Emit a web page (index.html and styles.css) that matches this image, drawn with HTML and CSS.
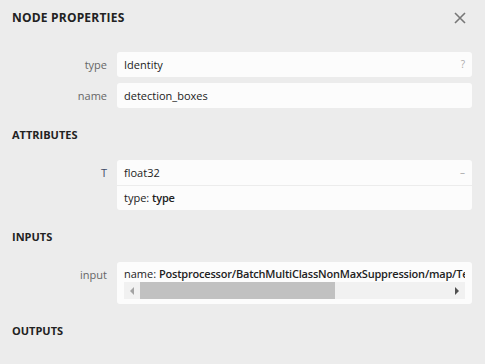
FILE: index.html
```html
<!DOCTYPE html>
<html lang="en">
<head>
  <meta charset="UTF-8" />
  <title>Node Properties</title>
  <link rel="stylesheet" href="styles.css">
</head>
<body>
  <div class="sidebar">
    <div class="sidebar-header">
      <span class="sidebar-title">NODE PROPERTIES</span>
      <span class="sidebar-close">
        <svg width="12" height="12" viewBox="0 0 12 12"><path d="M1 1 L11 11 M11 1 L1 11" stroke="#777" stroke-width="1.6" fill="none"/></svg>
      </span>
    </div>

    <div class="sidebar-content">
      <div class="item">
        <div class="item-name">type</div>
        <div class="item-value-list">
          <div class="item-value">Identity<span class="item-button">?</span></div>
        </div>
      </div>
      <div class="item">
        <div class="item-name">name</div>
        <div class="item-value-list">
          <div class="item-value">detection_boxes</div>
        </div>
      </div>

      <div class="section-header">ATTRIBUTES</div>
      <div class="item">
        <div class="item-name item-name-attr">T</div>
        <div class="item-value-list">
          <div class="item-value">float32<span class="item-button">&ndash;</span></div>
          <div class="item-value item-value-sub">type: <b>type</b></div>
        </div>
      </div>

      <div class="section-header">INPUTS</div>
      <div class="item">
        <div class="item-name">input</div>
        <div class="item-value-list">
          <div class="item-value item-value-scroll">
            <div class="scroll-text">name: <b>Postprocessor/BatchMultiClassNonMaxSuppression/map/TensorArrayStack/TensorArrayGatherV3</b></div>
            <div class="scrollbar">
              <span class="arrow arrow-left"></span>
              <span class="thumb"></span>
              <span class="arrow arrow-right"></span>
            </div>
          </div>
        </div>
      </div>

      <div class="section-header">OUTPUTS</div>
    </div>
  </div>
</body>
</html>
```

FILE: styles.css
```css
body {
  margin: 0;
  background-color: #ececec;
  font-family: "Open Sans", "Noto Sans", sans-serif;
  font-size: 11px;
  color: #333;
}
.sidebar {
  width: 485px;
  height: 364px;
  overflow: hidden;
}
.sidebar-header {
  display: flex;
  justify-content: space-between;
  align-items: center;
  height: 35px;
  padding: 0 19px 0 12px;
}
.sidebar-title {
  font-weight: bold;
  font-size: 12px;
  letter-spacing: 0.2px;
  color: #222;
}
.sidebar-close {
  display: flex;
}
.sidebar-content {
  padding: 17px 13px 0 12px;
}
.item {
  display: flex;
  margin-bottom: 6px;
}
.item-name {
  width: 95px;
  padding-right: 10px;
  text-align: right;
  color: #666;
  line-height: 25px;
}
.item-name-attr {
  color: #3f4b68;
}
.item-value-list {
  flex: 1;
  min-width: 0;
  background: #fcfcfc;
  border-radius: 3px;
}
.item-value {
  position: relative;
  height: 25px;
  line-height: 25px;
  padding: 0 7px;
  color: #222;
}
.item-value b {
  font-weight: 600;
  letter-spacing: -0.2px;
}
.item-value-sub {
  height: 24px;
  line-height: 24px;
  border-top: 1px solid #ececec;
}
.item-button {
  position: absolute;
  right: 7px;
  top: 0;
  color: #aaa;
  font-size: 10px;
}
.section-header {
  font-weight: bold;
  font-size: 11px;
  color: #222;
  padding: 13px 0 18px;
}
.item-value-scroll {
  height: auto;
  line-height: normal;
  padding: 4px 7px 5px;
}
.scroll-text {
  white-space: nowrap;
  overflow: hidden;
  height: 16px;
  line-height: 16px;
}
.scrollbar {
  display: flex;
  align-items: center;
  height: 17px;
  background: #f1f1f1;
}
.arrow {
  width: 0;
  height: 0;
  border-top: 4px solid transparent;
  border-bottom: 4px solid transparent;
}
.arrow-left {
  border-right: 4px solid #a3a3a3;
  margin: 0 6px 0 6px;
}
.arrow-right {
  border-left: 4px solid #505050;
  margin: 0 6px 0 auto;
}
.thumb {
  width: 195px;
  height: 17px;
  background: #c1c1c1;
}
```
